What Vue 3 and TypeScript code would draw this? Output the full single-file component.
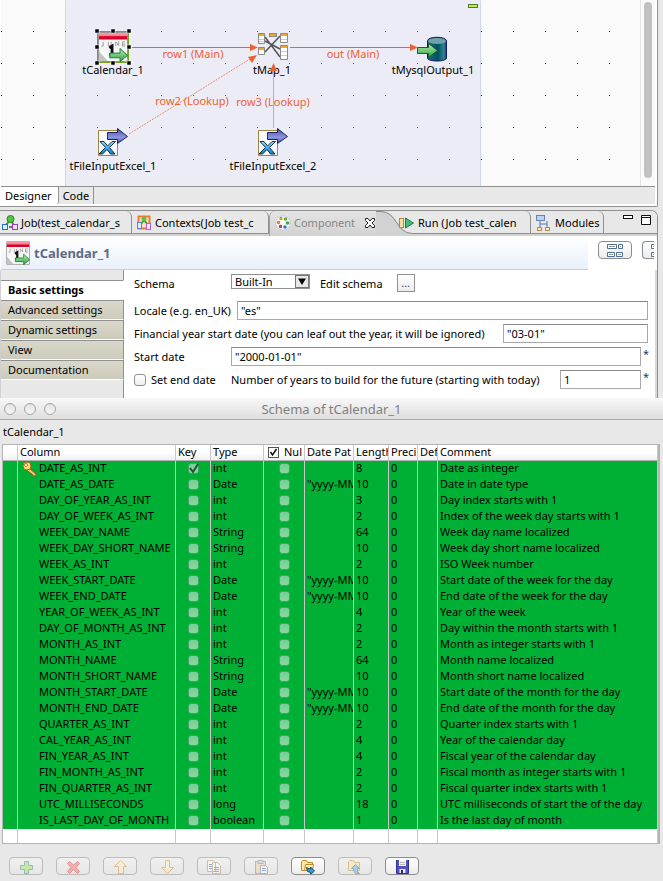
<script setup lang="ts">
import { ref } from 'vue'

interface SchemaColumn {
  name: string
  key: boolean
  type: string
  nullable: boolean
  pattern: string
  length: string
  precision: string
  comment: string
}

const column = (name: string, type: string, length: string, comment: string): SchemaColumn => ({
  name,
  key: name === 'DATE_AS_INT',
  type,
  nullable: false,
  pattern: type === 'Date' ? '"yyyy-MM' : '',
  length,
  precision: '0',
  comment,
})

const columns = ref<SchemaColumn[]>([
  column('DATE_AS_INT', 'int', '8', 'Date as integer'),
  column('DATE_AS_DATE', 'Date', '10', 'Date in date type'),
  column('DAY_OF_YEAR_AS_INT', 'int', '3', 'Day index starts with 1'),
  column('DAY_OF_WEEK_AS_INT', 'int', '2', 'Index of the week day starts with 1'),
  column('WEEK_DAY_NAME', 'String', '64', 'Week day name localized'),
  column('WEEK_DAY_SHORT_NAME', 'String', '10', 'Week day short name localized'),
  column('WEEK_AS_INT', 'int', '2', 'ISO Week number'),
  column('WEEK_START_DATE', 'Date', '10', 'Start date of the week for the day'),
  column('WEEK_END_DATE', 'Date', '10', 'End date of the week for the day'),
  column('YEAR_OF_WEEK_AS_INT', 'int', '4', 'Year of the week'),
  column('DAY_OF_MONTH_AS_INT', 'int', '2', 'Day within the month starts with 1'),
  column('MONTH_AS_INT', 'int', '2', 'Month as integer starts with 1'),
  column('MONTH_NAME', 'String', '64', 'Month name localized'),
  column('MONTH_SHORT_NAME', 'String', '10', 'Month short name localized'),
  column('MONTH_START_DATE', 'Date', '10', 'Start date of the month for the day'),
  column('MONTH_END_DATE', 'Date', '10', 'End date of the month for the day'),
  column('QUARTER_AS_INT', 'int', '2', 'Quarter index starts with 1'),
  column('CAL_YEAR_AS_INT', 'int', '4', 'Year of the calendar day'),
  column('FIN_YEAR_AS_INT', 'int', '4', 'Fiscal year of the calendar day'),
  column('FIN_MONTH_AS_INT', 'int', '2', 'Fiscal month as integer starts with 1'),
  column('FIN_QUARTER_AS_INT', 'int', '2', 'Fiscal quarter index starts with 1'),
  column('UTC_MILLISECONDS', 'long', '18', 'UTC milliseconds of start the of the day'),
  column('IS_LAST_DAY_OF_MONTH', 'boolean', '1', 'Is the last day of month'),
])

const sections = ['Basic settings', 'Advanced settings', 'Dynamic settings', 'View', 'Documentation']
const activeSection = ref('Basic settings')

const locale = ref('"es"')
const yearStart = ref('"03-01"')
const startDate = ref('"2000-01-01"')
const years = ref('1')
const setEnd = ref(false)
const allNullable = ref(true)

const actions = [
  { id: 'add', label: 'Add column', disabled: true },
  { id: 'remove', label: 'Remove column', disabled: true },
  { id: 'up', label: 'Move up', disabled: true },
  { id: 'down', label: 'Move down', disabled: true },
  { id: 'copy', label: 'Copy', disabled: true },
  { id: 'paste', label: 'Paste', disabled: true },
  { id: 'import', label: 'Import schema', disabled: false },
  { id: 'export', label: 'Export schema', disabled: true },
  { id: 'save', label: 'Save', disabled: false },
]
</script>

<template>
  <div class="studio">
    <svg class="defs" width="0" height="0" aria-hidden="true">
      <defs>
        <linearGradient id="green" x1="0" y1="0" x2="0" y2="1">
          <stop offset="0" stop-color="#b8f0a8" /><stop offset="1" stop-color="#2ea04c" />
        </linearGradient>
        <linearGradient id="red" x1="0" y1="0" x2="0" y2="1">
          <stop offset="0" stop-color="#f4a0ac" /><stop offset=".5" stop-color="#ee8090" /><stop offset=".55" stop-color="#e00028" /><stop offset="1" stop-color="#d80028" />
        </linearGradient>
        <linearGradient id="navy" x1="0" y1="0" x2="0" y2="1">
          <stop offset="0" stop-color="#4a4fae" /><stop offset=".6" stop-color="#8f94de" /><stop offset="1" stop-color="#4a4fa6" />
        </linearGradient>
        <linearGradient id="teal" x1="0" y1="0" x2="1" y2="0">
          <stop offset="0" stop-color="#1d6f7c" /><stop offset=".55" stop-color="#00515f" /><stop offset=".85" stop-color="#2f8292" /><stop offset="1" stop-color="#0a4a58" />
        </linearGradient>
        <linearGradient id="blue" x1="0" y1="0" x2="0" y2="1">
          <stop offset="0" stop-color="#8fe0fa" /><stop offset="1" stop-color="#1279c4" />
        </linearGradient>
        <symbol id="calendar" viewBox="0 0 32 32">
          <rect x=".5" y=".5" width="31" height="31" rx="2" fill="#f6f6f6" stroke="#8a8a8a" />
          <rect x="1" y="1" width="30" height="7" fill="url(#red)" />
          <path d="M3.500 15h2v-4.500M11 10.500v4h3v-4M19 15v-4.500l3 4v-4.500M29 10.500h-3v4.500h3M26 13h3" stroke="#999" fill="none" />
          <path d="M1 19l10 12H1z" fill="#c4c4c4" /><path d="M2 20l9 10" stroke="#fff" stroke-width="2" />
          <path d="M12 17l3-2v8M12 24h7" stroke="#111" stroke-width="3" fill="none" />
          <path d="M12.500 22.500h11v-5l8 7.500-8 6.500v-4h-11z" fill="url(#green)" stroke="#187838" />
        </symbol>
        <symbol id="excel" viewBox="0 0 32 30">
          <path d="M1.500 3.500h19v25h-19z" fill="#f7faff" stroke="#a08440" />
          <path d="M3 14.500h4l3.500 4.500 4.500-4.500h3.500L12.500 20.500l5.500 6.500h-4.500l-3.500-4.500-4.500 4.500H2l6.500-6.500z" fill="url(#blue)" stroke="#12304c" />
          <path d="M10.500 5.500h10V1.500l10 8-10 7v-4h-10z" fill="url(#navy)" stroke="#20245e" />
        </symbol>
        <symbol id="layout" viewBox="0 0 16 13">
          <path d="M.5.500h9v4h-9zM11.500.500h4v4h-4zM.5 8.500h7v4h-7zM9.500 8.500h6v4h-6z" fill="#fff" stroke="#4f6f8e" />
          <path d="M2 2h6v1H2zM13 2h1v1h-1zM2 10h4v1H2zM11 10h3v1h-3z" fill="#999" />
        </symbol>
      </defs>
    </svg>

    <section class="editor">
      <div class="workspace">
        <div class="canvas">
          <svg class="diagram" width="640" height="186">
            <defs>
              <pattern id="dots" x="1" y="31" width="32" height="32" patternUnits="userSpaceOnUse">
                <rect width="1" height="1" fill="#111" />
              </pattern>
              <pattern id="softDots" x="1" y="31" width="32" height="32" patternUnits="userSpaceOnUse">
                <rect width="1" height="1" fill="#55555c" />
              </pattern>
            </defs>
            <rect y="20" width="640" height="166" fill="url(#dots)" />
            <rect x="65.500" y="-3.500" width="415" height="200" rx="5" fill="#ececf7" stroke="#ccd8ee" />
            <rect x="65" y="20" width="416" height="166" fill="url(#softDots)" />
            <rect x="468.500" y="4.500" width="9" height="3" fill="#b8f048" stroke="#587828" />

            <svg x="98" y="32" width="30" height="30"><use href="#calendar" /></svg>
            <rect x="97.500" y="31.500" width="31" height="31" fill="none" stroke="#78a028" />
            <path d="M95 29h4v4h-4zM111 29h4v4h-4zM127 29h4v4h-4zM95 45h4v4h-4zM127 45h4v4h-4zM95 61h4v4h-4zM111 61h4v4h-4zM127 61h4v4h-4z" fill="#000" stroke="#fff" stroke-width=".5" />

            <g fill="#fff" stroke="#8a8a8a">
              <path d="M265 37l15 20M265 52l15-16M265 41l15 8" stroke="#555" fill="none" stroke-width="1.500" />
              <path d="M258.500 33.500h6v10h-6zM280.500 33.500h7v9h-7zM258.500 47.500h6v7h-6zM280.500 45.500h7v14h-7z" />
              <rect x="269.500" y="33.500" width="7" height="3" fill="#f5a623" />
              <path d="M259 34h5v2h-5zM281 34h6v2h-6zM259 48h5v2h-5zM281 46h6v2h-6z" fill="#f5a623" stroke="none" />
              <path d="M259 39.500h5M259 41.500h5M281 39.500h6M281 51.500h6M281 55.500h6" stroke="#ccc" />
            </g>

            <path d="M427.500 41c0-5 19-5 19 0v17c0 4-19 4-19 0z" fill="url(#teal)" stroke="#181868" />
            <ellipse cx="437" cy="41" rx="9" ry="3" fill="#72a0aa" />
            <path d="M417.500 47.500h11v-4l9 7-9 7v-4h-11z" fill="url(#green)" stroke="#145c34" />
            <svg x="97" y="127" width="32" height="30"><use href="#excel" /></svg>
            <svg x="257" y="127" width="32" height="30"><use href="#excel" /></svg>

            <g class="node-label">
              <text x="113" y="74">tCalendar_1</text>
              <text x="272" y="74">tMap_1</text>
              <text x="433" y="74">tMysqlOutput_1</text>
              <text x="113" y="170">tFileInputExcel_1</text>
              <text x="273" y="170">tFileInputExcel_2</text>
            </g>
            <path d="M132 47.500h118M290 47.500h120" stroke="#f06030" />
            <path d="M129 134L250 59" stroke="#f08c6c" stroke-dasharray="2 1" />
            <path d="M273.500 128V70" stroke="#f09c80" />
            <path d="M250 44v7l8-3.500zM410 44v7l8-3.500zM257 55l-9 2 4 6zM270 71h7l-3.500-8z" fill="#f06030" />
            <g class="link-label">
              <text x="193" y="58">row1 (Main)</text>
              <text x="353" y="58">out (Main)</text>
              <text x="192" y="105">row2 (Lookup)</text>
              <text x="273" y="106">row3 (Lookup)</text>
            </g>
          </svg>
        </div>
        <div class="scroll"><div class="thumb"></div></div>
      </div>
      <nav class="views">
        <button class="view current">Designer</button>
        <button class="view">Code</button>
      </nav>
    </section>

    <section class="properties">
      <div class="tabs">
        <button class="tab job">
          <svg width="16" height="16"><path d="M8 5L4 10M9 5l3 6M7 12h3" stroke="#3a9a30" stroke-width="2" /><circle cx="8.500" cy="4" r="3.500" fill="#52c840" stroke="#28841e" /><rect x=".5" y="9.500" width="5" height="5" fill="#d8f2fc" stroke="#2a70c8" /><rect x="10.500" y="9.500" width="5" height="5" fill="#f4e0fc" stroke="#9a3ac8" /></svg>
          <span>Job(test_calendar_s</span>
        </button>
        <button class="tab contexts">
          <svg width="14" height="16"><rect x="1.500" y="1.500" width="11" height="12" fill="#fbe0cc" stroke="#f07830" stroke-width="2" /><path d="M7 5L4 9M7 5l4 5" stroke="#3a9a30" stroke-width="2" /><circle cx="7" cy="4" r="2.500" fill="#60c048" /><rect x=".5" y="7.500" width="4" height="6" fill="#dceefc" stroke="#5a80d8" /><rect x="9.500" y="8.500" width="4" height="6" fill="#f4e0fc" stroke="#b060d8" /></svg>
          <span>Contexts(Job test_c</span>
        </button>
        <button class="tab component">
          <svg width="16" height="16"><circle cx="8" cy="8" r="7" fill="#fafcff" stroke="#b4c4d8" stroke-dasharray="2 1" /><g fill="none" stroke-width="1.500"><circle cx="6" cy="3.500" r="1" stroke="#d0a020" /><circle cx="10.500" cy="4" r="1" stroke="#60a830" /><circle cx="3.500" cy="7.500" r="1" stroke="#e08020" /><circle cx="12.500" cy="8" r="1" stroke="#40a040" /><circle cx="5.500" cy="11.500" r="1" stroke="#d03030" /><circle cx="10" cy="12" r="1" stroke="#3070c8" /></g></svg>
          <span>Component</span>
          <svg class="close" width="12" height="12"><path d="M1.500 1.500h2.500l2 2.500 2-2.500h2.500v2L8 6l2.500 2.500v2H8L6 8l-2 2.500H1.500v-2L4 6 1.500 3.500z" fill="#fff" stroke="#222" /></svg>
        </button>
        <svg class="swoop" width="36" height="25"><path d="M0 0h5c16 0 18 22 31 22v3H0z" fill="#d2d2d2" /><path d="M0 .5h5C21 .5 20 22.500 36 22.500" fill="none" stroke="#8c8c8c" /></svg>
        <button class="tab run">
          <svg width="16" height="13"><rect x=".5" y="1.500" width="4" height="9" fill="#f8e0a0" stroke="#b88830" /><path d="M6.500 1v10M6.500 1l8 5-8 5z" fill="#48b878" stroke="#1c7c4c" /></svg>
          <span>Run (Job test_calen</span>
        </button>
        <button class="tab modules">
          <svg width="15" height="16"><path d="M4 6v3h7V6M4 9v3M11 9v3" stroke="#5878a8" fill="none" /><rect x=".5" y=".5" width="8" height="5" fill="#bcd2f0" stroke="#6484b4" /><path d="M1.500 12.500h4v3h-4zM9.500 12.500h4v3h-4z" fill="#fff0c0" stroke="#b08030" /></svg>
          <span>Modules</span>
        </button>
        <div class="window-tools">
          <button class="tool" aria-label="Minimize"><svg width="10" height="11"><rect x=".5" y=".5" width="9" height="3" fill="#fff" stroke="#111" /></svg></button>
          <button class="tool" aria-label="Maximize"><svg width="10" height="11"><path d="M.5.500h9v9h-9zM1 2.500h8" fill="#fff" stroke="#111" /></svg></button>
        </div>
      </div>

      <header class="heading">
        <div class="banner">
          <svg width="24" height="24"><use href="#calendar" /></svg>
          <h1>tCalendar_1</h1>
        </div>
        <button class="pill" aria-label="Table layout"><svg width="16" height="13"><use href="#layout" /></svg></button>
        <button class="pill clipped" aria-label="List layout"><svg width="16" height="13"><use href="#layout" /></svg></button>
      </header>

      <div class="body">
        <nav class="sections">
          <button v-for="s in sections" :key="s" class="section" :class="{ active: s === activeSection }" @click="activeSection = s">{{ s }}</button>
        </nav>
        <form class="form" @submit.prevent>
          <div class="line schema">
            <label class="lead" for="schema">Schema</label>
            <span class="select-wrap">
              <select id="schema"><option>Built-In</option><option>Repository</option></select>
              <svg class="arrow" width="14" height="13"><rect x=".5" y=".5" width="13" height="12" fill="#e8e8e8" stroke="#777" /><path d="M3 3.500h8L7 10z" fill="#000" /></svg>
            </span>
            <label class="edit" for="edit">Edit schema</label>
            <button id="edit" type="button" class="dots">…</button>
          </div>
          <div class="line">
            <label class="locale" for="locale">Locale (e.g. en_UK)</label>
            <input id="locale" v-model="locale" class="field grow" type="text" />
          </div>
          <div class="line">
            <label class="wide" for="year">Financial year start date (you can leaf out the year, it will be ignored)</label>
            <input id="year" v-model="yearStart" class="field medium" type="text" />
          </div>
          <div class="line required">
            <label class="lead" for="start">Start date</label>
            <input id="start" v-model="startDate" class="field grow" type="text" />
            <span class="star">*</span>
          </div>
          <div class="line required">
            <label class="lead check"><input v-model="setEnd" type="checkbox" />Set end date</label>
            <label class="wide" for="years">Number of years to build for the future (starting with today)</label>
            <input id="years" v-model="years" class="field short" type="text" />
            <span class="star">*</span>
          </div>
        </form>
      </div>
    </section>

    <section class="dialog">
      <header class="titlebar">
        <div class="lights"><button aria-label="Close"></button><button aria-label="Minimize"></button><button aria-label="Zoom"></button></div>
        <h2>Schema of tCalendar_1</h2>
      </header>
      <p class="subject">tCalendar_1</p>
      <div class="grid">
        <table>
          <colgroup>
            <col class="c-mark" /><col class="c-name" /><col class="c-key" /><col class="c-type" /><col class="c-null" />
            <col class="c-date" /><col class="c-length" /><col class="c-prec" /><col class="c-def" /><col />
          </colgroup>
          <thead>
            <tr>
              <th></th><th>Column</th><th>Key</th><th>Type</th>
              <th><label class="null-head"><span class="box"><input v-model="allNullable" type="checkbox" /><svg v-if="allNullable" width="11" height="11"><path d="M2.500 5l2 3 4-6" fill="none" stroke="#111" stroke-width="1.500" /></svg></span>Nul</label></th>
              <th>Date Pat</th><th>Length</th><th>Preci</th><th>Def</th><th>Comment</th>
            </tr>
          </thead>
          <tbody>
            <tr v-for="c in columns" :key="c.name">
              <td></td>
              <td class="name">
                <svg v-if="c.key" class="key" width="16" height="16"><path d="M7 7l7 6v2h-3l-1-2-2-1-3-3z" fill="#f8c860" stroke="#90501c" /><circle cx="5" cy="5" r="4" fill="#fce070" stroke="#a86418" /><circle cx="4" cy="4" r="1.500" fill="#fff" stroke="#b88020" /></svg>
                {{ c.name }}
              </td>
              <td class="tick">
                <span class="box"><input v-model="c.key" type="checkbox" :aria-label="'Key ' + c.name" /><svg v-if="c.key" width="11" height="11"><path d="M2 5l3 4 5-8" fill="none" stroke="#1c5434" stroke-width="2" /></svg></span>
              </td>
              <td>{{ c.type }}</td>
              <td class="tick"><span class="box"><input v-model="c.nullable" type="checkbox" :aria-label="'Nullable ' + c.name" /></span></td>
              <td>{{ c.pattern }}</td>
              <td>{{ c.length }}</td>
              <td>{{ c.precision }}</td>
              <td></td>
              <td>{{ c.comment }}</td>
            </tr>
            <tr class="blank"><td v-for="n in 10" :key="n"></td></tr>
          </tbody>
        </table>
      </div>
      <div class="actions">
        <button v-for="a in actions" :key="a.id" class="pill" :disabled="a.disabled" :aria-label="a.label">
          <svg width="16" height="15">
            <path v-if="a.id === 'add'" d="M6.500 2.500h4v4h4v4h-4v4h-4v-4h-4v-4h4z" fill="#a8e060" stroke="#209070" />
            <path v-else-if="a.id === 'remove'" d="M2.500 4.500l2-2L8.500 6l4-3.500 2 2L11 8.500l3.500 4-2 2-4-4-4 4-2-2L6 8.500z" fill="#f86868" stroke="#e02828" />
            <path v-else-if="a.id === 'up'" d="M8.500 1.500l6 6h-3v7h-5v-7h-4z" fill="#fff4c0" stroke="#d08820" />
            <path v-else-if="a.id === 'down'" d="M8.500 14.500l-6-6h4v-7h4v7h4z" fill="#fff4c0" stroke="#d08820" />
            <g v-else-if="a.id === 'copy'" fill="#fff" stroke="#a89058"><path d="M1.500 1.500h6l2 2v9h-8zM6.500 3.500h5l3 3v8h-8z" /><path d="M3 5.500h3M3 7.500h3M3 9.500h3M8 8.500h5M8 10.500h5M8 12.500h5" stroke="#3868c0" /></g>
            <g v-else-if="a.id === 'paste'"><rect x="2.500" y="2.500" width="10" height="12" fill="#f4d098" stroke="#a87838" /><path d="M5 1.500h5v3H5z" fill="#c8ccd8" stroke="#707888" /><path d="M7.500 6.500h5l2 2v6h-7z" fill="#fff" stroke="#5878b0" /><path d="M9 9.500h4M9 11.500h4" stroke="#3868c0" /></g>
            <g v-else-if="a.id === 'import'"><path d="M1.500 11.500v-9l1-1h4l1 2h5v8z" fill="#fce8a0" stroke="#c88820" /><path d="M4.500 11.500l1-6h8l-1 6z" fill="#fff4c8" stroke="#c88820" /><path d="M6.500 8.500l4 1.500V8l4 4-4 3.500v-2l-3-1z" fill="#3898d0" stroke="#185068" /></g>
            <g v-else-if="a.id === 'export'"><path d="M1.500 11.500v-9l1-1h4l1 2h5v8z" fill="#fce8a0" stroke="#c88820" /><path d="M4.500 9.500l4-4 4 4h-2v3l2 2h-4l-2-3v-2z" fill="#58b0d8" stroke="#106890" /></g>
            <g v-else><path d="M2.500 1v13.500h12V1" fill="#5050c0" stroke="#303098" /><path d="M5 1h7v6H5z" fill="#f4f4f8" /><path d="M6 3.500h5M6 5.500h5" stroke="#b8b8b8" /><path d="M5.500 10h6v4h-6z" fill="#e8e8f0" /><path d="M7 11h2v3H7z" fill="#282878" /></g>
          </svg>
        </button>
      </div>
    </section>
  </div>
</template>

<style>
body {
  margin: 0;
  background: #e8e8e8;
}
</style>

<style scoped>
.studio {
  font-family: "Noto Sans", "Open Sans", sans-serif;
  font-size: 11px;
  line-height: 16px;
  color: #000;
  background: #e8e8e8;
  overflow: hidden;
}
.studio * { box-sizing: border-box; }
.defs { position: absolute; }
button, input, select { font: inherit; color: inherit; margin: 0; padding: 0; border: 0; background: none; }
svg { display: block; flex: none; }

.editor {
  margin-right: 5px;
  padding: 0 2px 2px 1px;
  background: #fff;
  border-right: 1px solid #909090;
  border-bottom: 1px solid #909090;
  border-radius: 0 0 2px 0;
}
.workspace { display: flex; height: 186px; }
.canvas { flex: 1; min-width: 0; overflow: hidden; background: #fafafa; }
.diagram { margin-left: -1px; }
.node-label text { text-anchor: middle; fill: #000; }
.link-label text { text-anchor: middle; fill: #f06030; }
.scroll { width: 15px; padding: 2px 3px 8px 3px; border-left: 1px solid #e4e4e4; background: #fafafa; }
.thumb { height: 100%; border-radius: 4px; background: #c1c1c1; }
.views { display: flex; height: 18px; border-top: 1px solid #909090; background: #e8e8e8; }
.view { padding: 0 4px; line-height: 16px; border-right: 1px solid #909090; }
.view.current { padding-right: 6px; background: #fff; border-radius: 0 0 3px 0; }

.properties { margin: 3px 5px 0 0; border-right: 1px solid #909090; border-top: 1px solid #909090; border-radius: 0 7px 0 0; background: #fff; overflow: hidden; }
.tabs { display: flex; height: 25px; background: linear-gradient(#e8e8e8 22px, #909090 22px, #909090 23px, #d2d2d2 23px); }
.tab { display: flex; align-items: center; height: 22px; padding-top: 2px; flex: none; overflow: hidden; white-space: nowrap; border-right: 1px solid #909090; border-radius: 0 6px 0 0; }
.job { width: 132px; padding-left: 2px; gap: 3px; }
.contexts { width: 137px; padding-left: 5px; gap: 4px; }
.component { height: 25px; width: 107px; padding: 0 0 1px 5px; gap: 3px; color: #858585; border: 0; border-left: 1px solid #a0a0a0; border-radius: 6px 0 0 0; background: linear-gradient(#e4e4e4, #d2d2d2); }
.close { margin-left: auto; }
.swoop { margin-right: -13px; }
.run { width: 132px; gap: 3px; }
.modules { width: 73px; padding-left: 5px; gap: 4px; }
.window-tools { display: flex; gap: 8px; margin-left: auto; padding: 4px 6px 0 0; }
.tool { display: flex; align-items: flex-start; height: 12px; }

.heading { display: flex; align-items: flex-start; gap: 10px; height: 34px; margin-right: 3px; overflow: hidden; }
.banner { flex: 1; display: flex; align-items: center; gap: 4px; height: 34px; margin-left: 1px; padding-left: 5px; border-bottom: 1px solid #bcd0ef; background: linear-gradient(#fff, #e9f0fb); }
h1 { margin: 0; font-size: 13px; line-height: 18px; font-weight: 700; color: #5d6c80; }
.pill { display: flex; align-items: center; justify-content: center; width: 34px; height: 18px; flex: none; border: 1px solid #8c8c8c; border-radius: 4px; background: linear-gradient(#fff, #ececec); }
.pill:disabled { border-color: #bcbcbc; background: linear-gradient(#f0f0f0, #e6e6e6); }
.pill:disabled svg { opacity: .45; }
.heading .pill { margin-top: 5px; }
.heading .clipped { width: 12px; border-right: 0; border-radius: 4px 0 0 4px; justify-content: flex-start; padding-left: 8px; overflow: hidden; }

.body { display: flex; height: 128px; border-left: 1px solid #d0d0d0; border-right: 2px solid #d8d8d8; }
.sections { display: flex; flex-direction: column; width: 123px; padding-top: 10px; background: linear-gradient(90deg, #e8e8e8 122px, #909090 122px); }
.section { height: 20px; padding-left: 7px; text-align: left; line-height: 18px; background: linear-gradient(#d9d8ca, #cccbbb); border-bottom: 1px solid #fff; border-top: 1px solid #909090; border-right: 1px solid #909090; }
.section.active { font-weight: 700; background: #fff; border-right-color: #fff; }
.form { flex: 1; min-width: 0; padding: 4px 7px 0 10px; display: flex; flex-direction: column; gap: 4px; }
.line { display: flex; align-items: center; gap: 2px; height: 19px; white-space: nowrap; }
.line.schema { gap: 10px; height: 23px; align-items: flex-start; }
.lead { width: 97px; flex: none; }
.line.required .lead { width: 95px; }
.schema .lead, .edit { line-height: 20px; }
.schema .lead { width: 87px; }
.locale { width: 101px; }
.select-wrap { position: relative; display: block; width: 79px; height: 15px; }
select { appearance: none; width: 100%; height: 15px; padding-left: 3px; line-height: 13px; border: 1px solid #909090; background: #fff; }
.arrow { position: absolute; right: 1px; top: 1px; pointer-events: none; }
.dots { width: 18px; height: 18px; margin-left: 4px; line-height: 10px; border: 1px solid #909090; background: linear-gradient(#fff, #ececec); color: #304878; }
.field { height: 19px; padding: 0 3px; border: 1px solid #a8a8a8; border-top-color: #888; background: #fff; }
.grow { flex: 1; min-width: 0; }
.star { align-self: flex-start; width: 5px; line-height: 14px; color: #1c3c60; }
.check { display: flex; align-items: center; gap: 5px; }
.check input { appearance: none; width: 12px; height: 12px; border: 1px solid #909090; border-radius: 3px; background: linear-gradient(#fff, #eee); }
.wide { flex: 1; }
.medium { width: 145px; }
.short { width: 81px; }

.titlebar { display: flex; align-items: center; height: 22px; padding: 0 4px; border-bottom: 1px solid #acacac; background: linear-gradient(#f8f8f8, #dedede); }
.lights { display: flex; gap: 8px; width: 60px; }
.lights button { width: 12px; height: 12px; border: 1px solid #a4a4a4; border-radius: 50%; background: linear-gradient(#e2e2e2, #f8f8f8); }
h2 { flex: 1; margin: 0 60px 0 0; text-align: center; font-size: 13px; line-height: 20px; font-weight: 400; color: #808080; }
.subject { margin: 0; padding: 4px 3px; line-height: 16px; }
.grid { margin: 0 3px 0 2px; border: 1px solid #b4b4b4; border-right-width: 2px; }
table { width: 100%; table-layout: fixed; border-collapse: separate; border-spacing: 0; }
.c-mark { width: 15px; }
.c-name { width: 158px; }
.c-key { width: 35px; }
.c-type { width: 53px; }
.c-null { width: 41px; }
.c-date { width: 49px; }
.c-length { width: 35px; }
.c-prec { width: 29px; }
.c-def { width: 20px; }
th, td { height: 16px; padding: 0 0 0 2px; overflow: hidden; white-space: nowrap; vertical-align: top; text-align: left; font-weight: 400; line-height: 14px; border-right: 1px solid #c8c8c8; }
th { background: linear-gradient(#fff 50%, #f0f0f0); border-bottom: 1px solid #b4b4b4; }
td { background: #00b035; }
td.name { position: relative; padding-left: 21px; }
.key { position: absolute; left: 4px; top: 0; }
td.tick { padding: 0; }
.box { position: relative; display: block; width: 11px; height: 11px; }
.box svg { position: absolute; left: 0; top: 0; pointer-events: none; }
.box input { display: block; appearance: none; width: 11px; height: 11px; border: 1px solid #48a068; border-radius: 3px; background: linear-gradient(#74d094, #88d8a0); }
.tick .box { margin: 2px auto; }
.null-head { display: flex; align-items: center; gap: 5px; padding-left: 2px; }
.null-head .box input { border-color: #555; border-radius: 0; background: #fff; }
.blank td { height: 14px; background: #fff; }
.actions { display: flex; gap: 13px; padding: 13px 9px 6px; }
</style>
